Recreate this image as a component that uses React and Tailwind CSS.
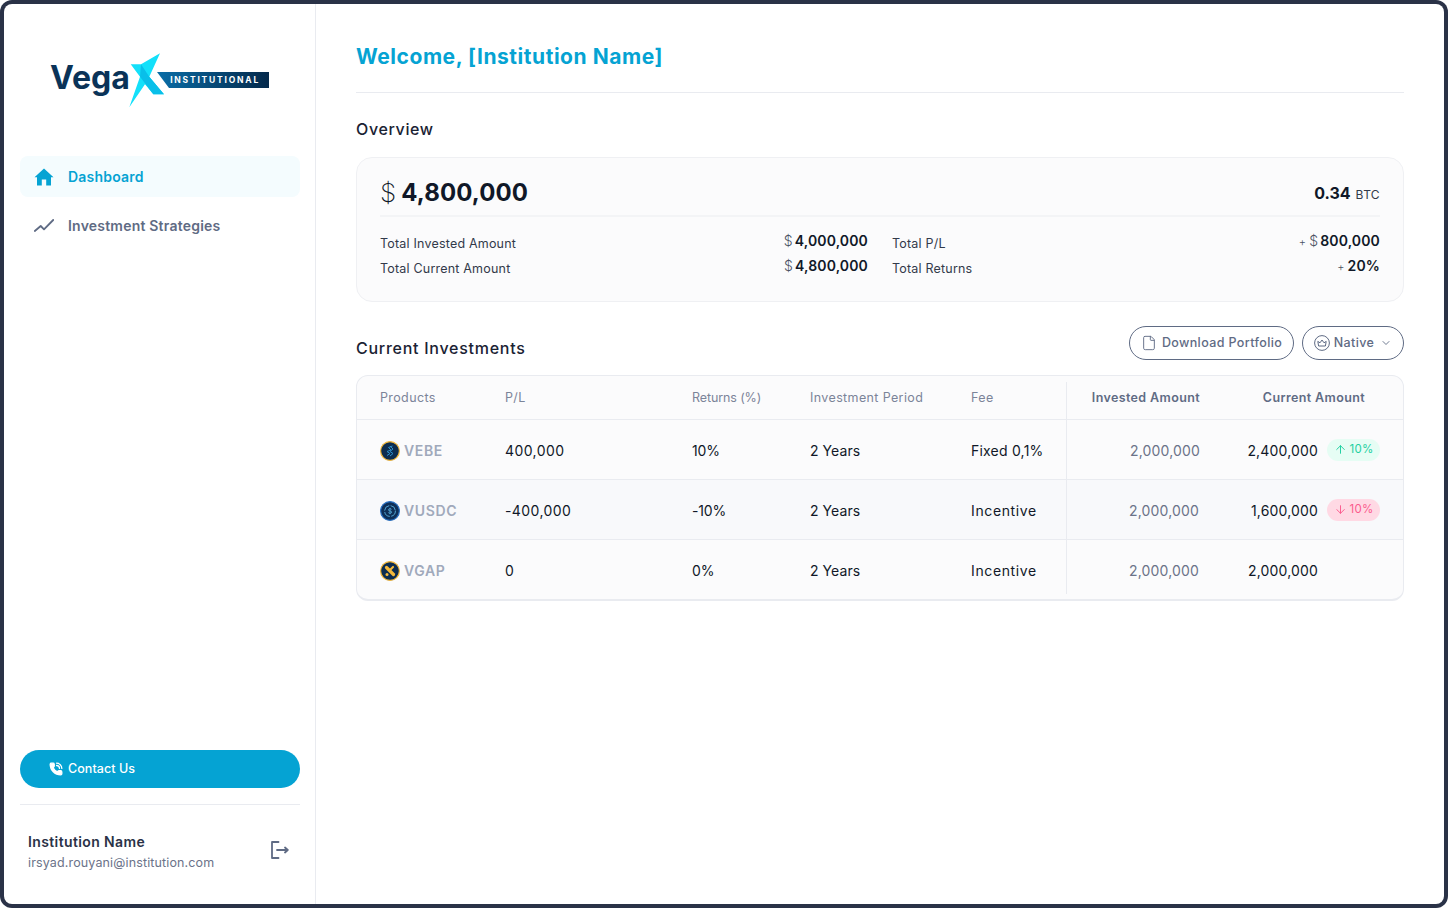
import React from "react";
import { File, ChevronDown, ArrowUp, ArrowDown } from "lucide-react";

function Logo() {
  return (
    <div className="relative w-[220px] h-[56px]">
      <span className="absolute -left-[1px] top-[5px] text-[32px] leading-[42px] font-bold text-[#0a3358]">Vega</span>
      <div className="absolute left-[106px] top-[20px] w-[112px] h-[16px] bg-gradient-to-r from-[#0a6ea8] to-[#04294b] flex items-center justify-end pr-[9px] [clip-path:polygon(0_0,100%_0,100%_100%,12px_100%)]">
        <span className="text-[8.5px] font-bold tracking-[0.21em] text-white leading-none">INSTITUTIONAL</span>
      </div>
      <svg className="absolute left-[74px] top-0" width="46" height="56" viewBox="0 0 46 56">
        <polygon points="5.7,12.3 16,12.3 35,1.3 24.3,24.7 39,42.3 28.3,42.3 20,32.3 4.3,55.3 15,24.7" fill="#13e0fa" />
        <polygon points="16,12.3 24.3,24.7 39,42.3 28.3,42.3 15,24.7" fill="#09bfe9" />
      </svg>
    </div>
  );
}

function HomeIcon() {
  return (
    <svg width="20" height="18" viewBox="0 0 20 18" fill="#05a3d3">
      <path d="M10 0.5 L19.5 9.2 L17 9.2 L17 17.5 L12.2 17.5 L12.2 11.5 L7.8 11.5 L7.8 17.5 L3 17.5 L3 9.2 L0.5 9.2 Z" />
    </svg>
  );
}

function TrendIcon() {
  return (
    <svg width="20" height="14" viewBox="0 0 20 14" fill="none" stroke="#5f6b84" strokeWidth="1.8" strokeLinecap="round" strokeLinejoin="round">
      <path d="M0.8 12 L6.7 7 L10 10.3 L19.2 1" />
    </svg>
  );
}

function PhoneIcon() {
  return (
    <svg width="14" height="14" viewBox="0 0 24 24" fill="none" stroke="white" strokeWidth="2.2" strokeLinecap="round" strokeLinejoin="round">
      <path d="M13 2a9 9 0 0 1 9 9" />
      <path d="M13 6a5 5 0 0 1 5 5" />
      <path fill="white" d="M13.832 16.568a1 1 0 0 0 1.213-.303l.355-.465A2 2 0 0 1 17 15h3a2 2 0 0 1 2 2v3a2 2 0 0 1-2 2A18 18 0 0 1 2 4a2 2 0 0 1 2-2h3a2 2 0 0 1 2 2v3a2 2 0 0 1-.8 1.6l-.468.351a1 1 0 0 0-.292 1.233 14 14 0 0 0 6.392 6.384" />
    </svg>
  );
}

function LogoutIcon() {
  return (
    <svg className="-mt-[9px]" width="18" height="18" viewBox="0 0 18 18" fill="none" stroke="#5f6b84" strokeWidth="1.8" strokeLinejoin="round" strokeLinecap="round">
      <path d="M7.5 1 H1 V17 H7.5" />
      <path d="M6 9 H16.5 M14 6.5 L16.8 9 L14 11.5" />
    </svg>
  );
}

function CrownIcon() {
  return (
    <svg width="16" height="16" viewBox="0 0 16 16" fill="none" stroke="#5f6b84" strokeWidth="1">
      <circle cx="8" cy="8" r="7.4" />
      <path d="M3.8 6.4 L6 7.8 L8 5 L10 7.8 L12.2 6.4 L11.4 11 H4.6 Z" strokeLinejoin="round" />
    </svg>
  );
}

function Coin({ kind }) {
  if (kind === "vebe") {
    return (
      <svg width="20" height="20" viewBox="0 0 20 20" fill="none">
        <circle cx="10" cy="10" r="9.4" fill="#0d2d4f" stroke="#f5b93a" strokeWidth="1.2" />
        <path d="M12.5 5 L8.5 6.5 L11 9 L7 10.5 L10 12.5 L7 14.5 M10 5 L13 8 L10 10.5 L13 12.5 L10 15" stroke="#2f8fc9" strokeWidth="1" />
      </svg>
    );
  }
  if (kind === "vusdc") {
    return (
      <svg width="20" height="20" viewBox="0 0 20 20" fill="none">
        <circle cx="10" cy="10" r="9.4" fill="#0f2f57" stroke="#2a72c4" strokeWidth="1.2" />
        <circle cx="10" cy="10" r="5.4" stroke="#58b0de" strokeWidth="0.9" strokeDasharray="7 1.5" />
        <path d="M11.6 8.4 C11.2 7.4 8.4 7.4 8.4 8.9 C8.4 10.5 11.7 9.5 11.7 11.1 C11.7 12.6 8.7 12.6 8.3 11.5 M10 6.8 V13.2" stroke="#58b0de" strokeWidth="0.8" />
      </svg>
    );
  }
  return (
    <svg width="20" height="20" viewBox="0 0 20 20" fill="none">
      <circle cx="10" cy="10" r="9.4" fill="#0d2d4f" stroke="#f5b93a" strokeWidth="1.2" />
      <path d="M6.5 6.5 L13.5 13.5" stroke="#f5b93a" strokeWidth="3.2" strokeLinecap="round" />
      <path d="M13 6 L10.5 8.5" stroke="#f5b93a" strokeWidth="2.2" strokeLinecap="round" />
      <circle cx="7" cy="13.5" r="1.5" fill="#f5b93a" />
    </svg>
  );
}

const COLS = "grid grid-cols-[148px_187px_118px_161px_95px_134px_1fr]";

function Badge({ up }) {
  const Arrow = up ? ArrowUp : ArrowDown;
  return (
    <span className={`ml-[9px] w-[53px] h-[22px] -mt-[2px] rounded-full flex items-center justify-center gap-[3px] text-[11.5px] tracking-[0.02em] ${up ? "bg-[#e6fdf4] text-[#1fd0a0]" : "bg-[#ffd9e4] text-[#fb5c8e]"}`}>
      <Arrow size={13} strokeWidth={1.8} />
      10%
    </span>
  );
}

function Row({ kind, name, pl, ret, fee, feeTracking, invested, current, badge, investedPr, striped, last }) {
  return (
    <div className={`${COLS} ${last ? "h-[59px]" : "h-[60px] border-b border-[#e9ebf0]"} text-[14px] tracking-[0.03em] text-[#101828] ${striped ? "bg-[#f8f9fb]" : ""}`}>
      <div className="pl-[23px] pt-[2px] flex items-center gap-1">
        <Coin kind={kind} />
        <span className="font-semibold tracking-[0.045em] text-[#a0a9bb]">{name}</span>
      </div>
      <div className="pt-[2px] flex items-center">{pl}</div>
      <div className="pt-[2px] flex items-center tracking-[-0.01em]">{ret}</div>
      <div className="pt-[2px] flex items-center tracking-[0.005em]">2 Years</div>
      <div className={`pt-[2px] flex items-center ${feeTracking}`}>{fee}</div>
      <div className={`flex items-center justify-end border-l border-[#e9ebf0] text-[#6b7389] tracking-[0.012em] ${investedPr} ${last ? "mb-[5px] pt-[7px]" : "pt-[2px]"}`}>{invested}</div>
      <div className="pt-[2px] flex items-center tracking-[0.012em]">
        <span className="w-[118px] text-right">{current}</span>
        {badge !== undefined && <Badge up={badge} />}
      </div>
    </div>
  );
}

function Stat({ label, plus, dollar, value }) {
  return (
    <div className="flex items-center justify-between h-[25px]">
      <span className="text-[12.5px] tracking-[0.016em] text-[#323a4a] mt-[6px]">{label}</span>
      <span className="flex items-baseline text-[14px] tracking-[0.01em] font-semibold text-[#101828] -mt-[2px]">
        {plus && <span className="text-[11px] font-light text-[#4a5263] mr-[3px]">+</span>}
        {dollar && <span className="font-light text-[#4a5263] mr-[2px]">$</span>}
        {value}
      </span>
    </div>
  );
}

export default function App() {
  return (
    <div className="w-[1448px] h-[908px] bg-white font-[Inter,sans-serif]">
      <div className="w-full h-full bg-[#2a3247] p-1 rounded-xl">
        <div className="flex h-full bg-white rounded-lg overflow-hidden">
          <aside className="w-[312px] shrink-0 border-r border-[#e9ebf0] pl-4 pr-[15px] flex flex-col">
            <div className="pt-[48px] pl-[31px] h-[152px]">
              <Logo />
            </div>
            <nav className="flex flex-col gap-2">
              <a className="h-[41px] rounded-lg bg-[#f4fcfe] pl-[14px] flex items-center gap-[14px] text-[14px] font-semibold tracking-[0.015em] text-[#05a3d3]">
                <HomeIcon />
                Dashboard
              </a>
              <a className="h-[41px] pl-[14px] flex items-center gap-[14px] text-[14px] font-semibold tracking-[0.015em] text-[#5f6b84]">
                <TrendIcon />
                Investment Strategies
              </a>
            </nav>
            <div className="mt-auto">
              <button className="w-full h-[38px] rounded-full bg-[#05a3d3] pl-[29px] flex items-center gap-[5px] text-[12.5px] tracking-[0.005em] font-medium text-white">
                <PhoneIcon />
                Contact Us
              </button>
              <div className="mt-4 border-t border-[#e9ebf0] h-[100px] pl-2 pr-[11px] flex items-center justify-between">
                <div className="-mt-[4px]">
                  <div className="text-[14px] font-semibold leading-[20px] tracking-[0.027em] text-[#2a3247]">Institution Name</div>
                  <div className="text-[12.5px] leading-[20px] tracking-[0.011em] text-[#6b7389] mt-[1px]">irsyad.rouyani@institution.com</div>
                </div>
                <LogoutIcon />
              </div>
            </div>
          </aside>
          <main className="flex-1 px-10">
            <div className="h-[89px] border-b border-[#e9ebf0] flex items-center pt-[18px]">
              <h1 className="text-[21px] font-bold tracking-[0.026em] text-[#05a3d3]">Welcome, [Institution Name]</h1>
            </div>
            <h2 className="mt-[24px] text-[16px] leading-[24px] font-medium tracking-[0.04em] text-[#1a2233]">Overview</h2>
            <section className="mt-4 h-[145px] rounded-2xl border border-[#eff0f3] bg-[#fbfbfc] px-[23px]">
              <div className="h-[59px] pt-[12px] flex items-center justify-between border-b-2 border-[#f3f4f6]">
                <div className="flex items-center gap-[5px] text-[#101828]">
                  <span className="text-[26px] font-extralight">$</span>
                  <span className="text-[24px] font-bold tracking-[0.005em]">4,800,000</span>
                </div>
                <div className="flex items-baseline gap-[5px] text-[#101828]">
                  <span className="text-[16px] font-bold">0.34</span>
                  <span className="text-[12px] tracking-[0.03em] text-[#323a4a]">BTC</span>
                </div>
              </div>
              <div className="pt-[12px] grid grid-cols-[488px_1fr]">
                <div>
                  <Stat label="Total Invested Amount" dollar value="4,000,000" />
                  <Stat label="Total Current Amount" dollar value="4,800,000" />
                </div>
                <div className="pl-6">
                  <Stat label="Total P/L" plus dollar value="800,000" />
                  <Stat label="Total Returns" plus value="20%" />
                </div>
              </div>
            </section>
            <div className="mt-6 h-[34px] flex items-center justify-between">
              <h2 className="text-[16px] font-medium tracking-[0.046em] text-[#1a2233] mt-[10px]">Current Investments</h2>
              <div className="flex gap-2 text-[12.5px] tracking-[0.03em] font-medium text-[#5f6b84]">
                <button className="h-[34px] w-[165px] rounded-full border border-[#5f6b84] flex items-center justify-center gap-[5px]">
                  <File size={16} strokeWidth={1.4} />
                  Download Portfolio
                </button>
                <button className="h-[34px] w-[102px] rounded-full border border-[#5f6b84] flex items-center justify-center gap-[4px]">
                  <CrownIcon />
                  Native
                  <ChevronDown size={12} strokeWidth={1.8} className="ml-[2px]" />
                </button>
              </div>
            </div>
            <section className="mt-[15px] rounded-xl border border-[#e9ebf0] border-b-2 bg-[#fbfbfc] overflow-hidden">
              <div className={`${COLS} h-[44px] border-b border-[#e9ebf0] text-[12.5px] tracking-[0.03em] text-[#7b8499]`}>
                <div className="pl-[23px] pt-[2px] flex items-center">Products</div>
                <div className="pt-[2px] flex items-center">P/L</div>
                <div className="pt-[2px] flex items-center tracking-[-0.009em]">Returns (%)</div>
                <div className="pt-[2px] flex items-center">Investment Period</div>
                <div className="pt-[2px] flex items-center">Fee</div>
                <div className="mt-[6px] border-l border-[#e9ebf0] flex items-center justify-end font-semibold text-[#5f6b84] pb-[4px]">Invested Amount</div>
                <div className="pt-[2px] flex items-center justify-end font-semibold text-[#5f6b84] pr-[38px]">Current Amount</div>
              </div>
              <Row kind="vebe" name="VEBE" pl="400,000" ret="10%" fee="Fixed 0,1%" feeTracking="tracking-[0.015em]" invested="2,000,000" current="2,400,000" badge={true} investedPr="" />
              <Row kind="vusdc" name="VUSDC" pl="-400,000" ret="-10%" fee="Incentive" feeTracking="tracking-[0.045em]" invested="2,000,000" current="1,600,000" badge={false} investedPr="pr-[1px]" striped />
              <Row kind="vgap" name="VGAP" pl="0" ret="0%" fee="Incentive" feeTracking="tracking-[0.045em]" invested="2,000,000" current="2,000,000" investedPr="pr-[1px]" last />
            </section>
          </main>
        </div>
      </div>
    </div>
  );
}
